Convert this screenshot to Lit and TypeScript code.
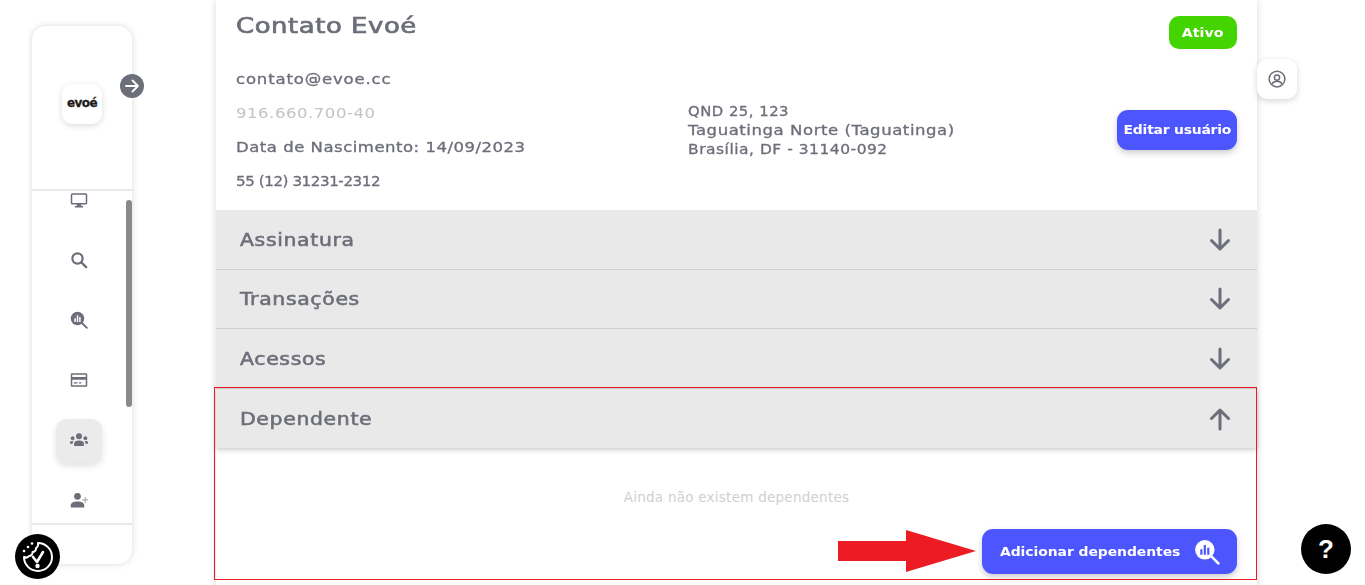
import { LitElement, html, css, svg } from "lit";
import { customElement } from "lit/decorators.js";

const ico = (body: unknown, size = 18, vb = "0 0 24 24") => html`<svg width=${size} height=${size} viewBox=${vb} fill="currentColor">${body}</svg>`;

const magnifierChart = (bars: string) => svg`
  <circle cx="10" cy="10" r="9"/>
  <path d="M16 16l6.5 6.5" stroke="currentColor" stroke-width="2.4" stroke-linecap="round" fill="none"/>
  <path d="M5.8 9.5h2v5h-2zM9 5.5h2v9H9zM12.2 8h2v6.500h-2z" fill=${bars}/>`;

const navIcons = [
  ico(svg`<path fill-rule="evenodd" d="M3 3h18a2 2 0 0 1 2 2v11a2 2 0 0 1-2 2h-6v2h2.500v2h-11v-2H9v-2H3a2 2 0 0 1-2-2V5a2 2 0 0 1 2-2zm0 2v11h18V5z"/>`),
  ico(svg`<circle cx="10" cy="10" r="6.800" fill="none" stroke="currentColor" stroke-width="3"/><path d="M15 15l6.500 6.500" stroke="currentColor" stroke-width="3.200" stroke-linecap="round"/>`),
  ico(magnifierChart("#fff")),
  ico(svg`<path fill-rule="evenodd" d="M2.500 3h19A1.500 1.500 0 0 1 23 4.500v15a1.500 1.500 0 0 1-1.500 1.500h-19A1.500 1.500 0 0 1 1 19.500v-15A1.500 1.500 0 0 1 2.500 3zM3 5v3h18V5zm0 6.500V19h18v-7.500zM5 15h5v1.500H5zm7 0h3v1.500h-3z"/>`),
  ico(svg`<circle cx="12" cy="7" r="4"/><path d="M5.500 20v-3.500C5.500 14 8 12.500 12 12.500s6.500 1.500 6.500 4V20z"/><circle cx="3.500" cy="9.500" r="2.500"/><circle cx="20.500" cy="9.500" r="2.500"/><path d="M0 17v-1.500C0 14 1.500 13 4.500 13c-.6 1-1 2-1 3.500V17zM24 17v-1.500c0-1.500-1.500-2.500-4.500-2.500.6 1 1 2 1 3.500V17z"/>`),
  ico(svg`<circle cx="10" cy="7" r="4.500"/><path d="M1 22v-3c0-3.200 3.600-5 9-5s9 1.800 9 5v3z"/><path d="M19.500 8h1.500v3h3v1.500h-3v3h-1.500v-3h-3V11h3z" opacity=".6"/>`),
];

const arrow = (up = false) => html`<svg class="chev" width="22" height="24" viewBox="0 0 22 24" fill="none" stroke="currentColor" stroke-width="3" stroke-linecap="round" stroke-linejoin="round">
  ${up ? svg`<path d="M11 22V3M2.500 11.500 11 3l8.500 8.500"/>` : svg`<path d="M11 2v19M2.500 12.500 11 21l8.500-8.500"/>`}
</svg>`;

@customElement("app-root")
export class AppRoot extends LitElement {
  static styles = css`
    :host {
      display: block; position: relative; width: 1365px; height: 585px; overflow: hidden; background: #fff;
      font-family: "DejaVu Sans", sans-serif; color: #6c6e79; font-weight: 400;
    }
    .layout { display: flex; align-items: flex-start; }
    .sidebar {
      position: relative; flex: none; box-sizing: border-box; width: 100px; height: 538px; margin: 26px 0 0 32px;
      border-radius: 14px; background: #fff; box-shadow: 0 0 6px rgba(0,0,0,.16); display: flex; flex-direction: column; overflow: visible;
    }
    .logo-area { flex: none; height: 165px; box-sizing: border-box; display: flex; align-items: center; justify-content: center; border-bottom: 2px solid #e8e8e8; padding-bottom: 7px; }
    .logo { width: 40px; height: 40px; border-radius: 10px; background: #fff; box-shadow: 0 2px 6px rgba(0,0,0,.14); display: flex; align-items: center; justify-content: center; color: #1c1c1c; font: 700 12px/1 "DejaVu Sans", sans-serif; letter-spacing: -.6px; padding-bottom: 2px; box-sizing: border-box; -webkit-text-stroke: .3px currentColor; }
    .toggle { position: absolute; left: 88px; top: 48px; width: 24px; height: 24px; border-radius: 50%; background: #6c6e79; color: #fff; display: flex; align-items: center; justify-content: center; }
    .nav { flex: 1; min-height: 0; overflow: hidden; padding-right: 6px; border-bottom: 2px solid #e8e8e8; display: flex; flex-direction: column; }
    .nav-list { margin-top: -21px; display: flex; flex-direction: column; }
    .nav-item { flex: none; height: 60px; display: flex; align-items: center; justify-content: center; }
    .nav-item.active .box { background: #ebebeb; box-shadow: 0 3px 6px rgba(0,0,0,.12); }
    .box { width: 46px; height: 44px; margin-top: 2px; padding-bottom: 2px; box-sizing: border-box; border-radius: 11px; display: flex; align-items: center; justify-content: center; }
    .scroll { position: absolute; left: 94px; top: 174px; width: 6px; height: 207px; border-radius: 3px; background: #8a8a8a; }
    .foot { flex: none; height: 39px; }
    .main { flex: none; box-sizing: border-box; width: 1041px; margin-left: 84px; background: #fff; box-shadow: 0 0 7px rgba(0,0,0,.16); padding-bottom: 40px; }
    .info { display: flex; height: 210px; box-sizing: border-box; padding: 0 20px; }
    .c-left { width: 452px; flex: none; padding-top: 13px; }
    .wide { transform-origin: left center; white-space: nowrap; }
    h1 { margin: 0 0 30px; font-size: 22px; line-height: 26px; font-weight: 400; letter-spacing: .45px; -webkit-text-stroke: .7px currentColor; transform: scaleX(1.18); }
    .lines { display: flex; flex-direction: column; gap: 14px; font-size: 14px; line-height: 20px; -webkit-text-stroke: .3px currentColor; }
    .l1 { letter-spacing: .7px; transform: scaleX(1.18); }
    .l2 { letter-spacing: .45px; color: #c2c3c8; filter: blur(.6px); -webkit-text-stroke: 0; transform: scaleX(1.18); }
    .l3 { letter-spacing: .42px; transform: scaleX(1.18); }
    .l4 { letter-spacing: -.4px; transform: scaleX(1.08); }
    .c-mid { flex: 1; padding-top: 101.500px; font-size: 14px; line-height: 19px; letter-spacing: .47px; -webkit-text-stroke: .3px currentColor; }
    .m1 { transform: scaleX(1.06); }
    .m2 { transform: scaleX(1.18); }
    .m3 { transform: scaleX(1.105); }
    .c-right { display: flex; flex-direction: column; align-items: flex-end; padding-top: 16px; }
    .badge { box-sizing: border-box; width: 68px; height: 33px; border-radius: 10px; background: #44d500; color: #fff; font-size: 12px; font-weight: 700; display: flex; align-items: center; justify-content: center; }
    .badge span { display: inline-block; transform: scaleX(1.18); }
    .btn { border-radius: 11px; background: #4d55ff; color: #fff; font-weight: 700; display: flex; align-items: center; justify-content: center; box-shadow: 0 3px 6px rgba(0,0,0,.2); }
    .edit { margin-top: 61px; width: 120px; height: 40px; font-size: 12px; letter-spacing: -.2px; }
    .edit span { display: inline-block; transform: scaleX(1.16); }
    .row { box-sizing: border-box; height: 59.500px; background: #e9e9e9; border-bottom: 1px solid #cfcfcf; display: flex; align-items: center; justify-content: space-between; padding: 1px 26px 0 24px; font-size: 17px; letter-spacing: .55px; -webkit-text-stroke: .55px currentColor; }
    .row span { display: inline-block; transform: scaleX(1.2); transform-origin: left center; }
    .row.open { border-bottom: 0; box-shadow: 0 2px 5px rgba(0,0,0,.2); position: relative; }
    .panel { display: flex; flex-direction: column; padding: 39px 20px 0; }
    .empty { text-align: center; font-size: 13.500px; line-height: 20px; color: #cfcfd3; letter-spacing: .25px; }
    .add { align-self: flex-end; box-sizing: border-box; margin-top: 22px; width: 255px; height: 45px; padding: 0 17px 0 18px; justify-content: space-between; font-size: 12px; letter-spacing: -.05px; color: #fff; }
    .add span { display: inline-block; transform: scaleX(1.16); transform-origin: left center; }
    .profile { flex: none; width: 40px; height: 40px; margin-top: 59px; border-radius: 10px; background: #fff; box-shadow: 0 2px 6px rgba(0,0,0,.16); display: flex; align-items: center; justify-content: center; }
    .outline { position: absolute; left: 214px; top: 387px; width: 1043px; height: 193px; box-sizing: border-box; border: 1px solid #ed1c24; pointer-events: none; }
    .red-arrow { position: absolute; left: 838px; top: 530px; }
    .fab { position: absolute; border-radius: 50%; background: #000; color: #fff; display: flex; align-items: center; justify-content: center; }
    .cookie { left: 15px; top: 534px; width: 45px; height: 45px; }
    .help { left: 1301px; top: 524px; width: 50px; height: 50px; font: 700 26px/1 "Liberation Sans", sans-serif; }
  `;

  render() {
    return html`
      <div class="layout">
        <aside class="sidebar">
          <div class="logo-area"><div class="logo">evoé</div></div>
          <div class="toggle"><svg width="16" height="16" viewBox="0 0 16 16" fill="none" stroke="currentColor" stroke-width="1.800" stroke-linecap="round" stroke-linejoin="round"><path d="M2 8h12M8.500 2.500 14 8l-5.500 5.500"/></svg></div>
          <nav class="nav"><div class="nav-list">
            ${navIcons.map((i, n) => html`<div class="nav-item ${n === 4 ? "active" : ""}"><div class="box">${i}</div></div>`)}
          </div></nav>
          <div class="foot"></div>
          <div class="scroll"></div>
        </aside>
        <main class="main">
          <section class="info">
            <div class="c-left">
              <h1 class="wide">Contato Evoé</h1>
              <div class="lines">
                <div class="wide l1">contato@evoe.cc</div>
                <div class="wide l2">916.660.700-40</div>
                <div class="wide l3">Data de Nascimento: 14/09/2023</div>
                <div class="wide l4">55 (12) 31231-2312</div>
              </div>
            </div>
            <div class="c-mid">
              <div class="wide m1">QND 25, 123</div>
              <div class="wide m2">Taguatinga Norte (Taguatinga)</div>
              <div class="wide m3">Brasília, DF - 31140-092</div>
            </div>
            <div class="c-right">
              <div class="badge"><span>Ativo</span></div>
              <div class="btn edit"><span>Editar usuário</span></div>
            </div>
          </section>
          <div class="row"><span>Assinatura</span>${arrow()}</div>
          <div class="row"><span>Transações</span>${arrow()}</div>
          <div class="row"><span>Acessos</span>${arrow()}</div>
          <div class="row open"><span>Dependente</span>${arrow(true)}</div>
          <div class="panel">
            <div class="empty">Ainda não existem dependentes</div>
            <div class="btn add"><span>Adicionar dependentes</span>${ico(magnifierChart("#4d55ff"), 26)}</div>
          </div>
        </main>
        <div class="profile"><svg width="18" height="18" viewBox="0 0 24 24" fill="none" stroke="currentColor" stroke-width="2"><circle cx="12" cy="12" r="10.500"/><circle cx="12" cy="10" r="3.500"/><path d="M5 19c1.500-3 4-4 7-4s5.500 1 7 4"/></svg></div>
      </div>
      <div class="outline"></div>
      <svg class="red-arrow" width="139" height="42" viewBox="0 0 139 42"><path d="M0 11h68V0l70 21-70 21V31H0z" fill="#ed1c24"/></svg>
      <div class="fab cookie"><svg width="34" height="34" viewBox="0 0 34 34" fill="none" stroke="#fff" stroke-width="2" stroke-linecap="round" stroke-linejoin="round"><path d="M17 3a14 14 0 1 1-14 14c2 1 4 .5 5-1 2 0 4-2 3.500-4 2 0 4-2 3.500-4 1.500-.5 2.500-3 2-5z"/><path d="M12 17l4 5 6-10" stroke-width="2.600"/><circle cx="16.500" cy="26" r="1.200" fill="#fff"/><circle cx="7" cy="7" r="1.300" fill="#fff" stroke="none"/><circle cx="11" cy="3.500" r="1.300" fill="#fff" stroke="none"/><circle cx="3" cy="11" r="1.300" fill="#fff" stroke="none"/></svg></div>
      <div class="fab help">?</div>
    `;
  }
}
